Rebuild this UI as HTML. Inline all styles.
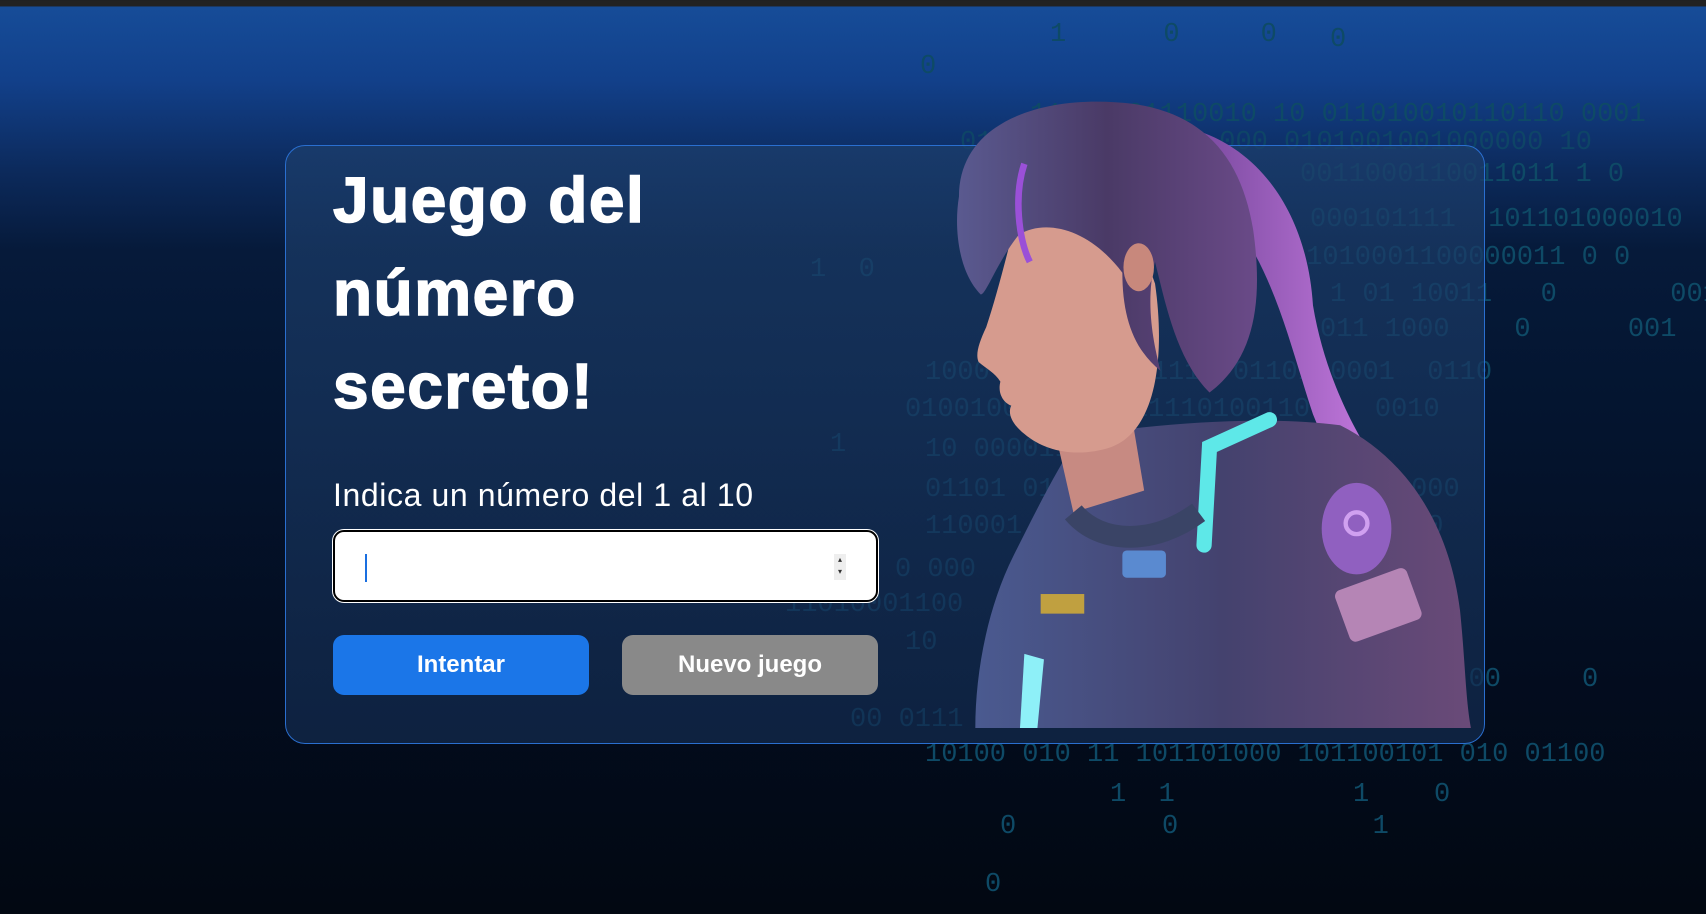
<!DOCTYPE html>
<html><head><meta charset="utf-8"><style>
*{margin:0;padding:0;box-sizing:border-box}
body{width:1706px;height:914px;overflow:hidden;position:relative;font-family:"Liberation Sans",sans-serif;
background:linear-gradient(180deg,#222 0,#222 6px,#164c98 7px,#12408a 80px,#0c2a5c 170px,#061a3a 250px,#041530 400px,#030d20 650px,#020812 914px)}
.bin{position:absolute;font-family:"Liberation Mono",monospace;font-size:27px;color:#0e4a66;white-space:pre}
.card{position:absolute;left:285px;top:145px;width:1200px;height:599px;border:1px solid #2a6fd0;border-radius:20px;
background:linear-gradient(180deg,rgba(28,62,108,.72),rgba(18,42,78,.72))}
h1{position:absolute;left:333px;top:154px;font-size:64px;line-height:93px;color:#fff;font-weight:bold;letter-spacing:1.5px;-webkit-text-stroke:1.5px #fff}
.lbl{position:absolute;left:333px;top:477px;font-size:32px;letter-spacing:0.6px;color:#fff}
.inp{position:absolute;left:333px;top:530px;width:545px;height:72px;background:#fff;border:2px solid #000;border-radius:11px;box-shadow:0 0 0 1px #fff}
.caret{position:absolute;left:30px;top:22px;width:2px;height:28px;background:#1a6fe0}
.spin{position:absolute;right:30px;top:22px;width:12px;height:26px;background:#eee;font-size:8px;line-height:12px;text-align:center;color:#333}
.btn{position:absolute;top:635px;height:60px;border-radius:11px;color:#fff;font-weight:bold;font-size:24px;display:flex;align-items:center;justify-content:center}
</style></head><body>
<div class="bin" style="left:1030px;top:100px">11 00001110010 10 011010010110110 0001</div>
<div class="bin" style="left:960px;top:128px;opacity:.8">0110            000 0101001001000000 10</div>
<div class="bin" style="left:1300px;top:160px">0011000110011011 1 0</div>
<div class="bin" style="left:1310px;top:205px">000101111  101101000010</div>
<div class="bin" style="left:1290px;top:243px">11010001100000011 0 0</div>
<div class="bin" style="left:1330px;top:280px">1 01 10011   0       0010</div>
<div class="bin" style="left:1320px;top:315px">011 1000    0      001</div>
<div class="bin" style="left:925px;top:358px">1000          1110 0110100001  0110</div>
<div class="bin" style="left:905px;top:395px">0100100       1111010011000  0010</div>
<div class="bin" style="left:925px;top:435px">10 0000111      1110111</div>
<div class="bin" style="left:925px;top:475px">01101 010       0010 111111 01000</div>
<div class="bin" style="left:925px;top:512px">110001 1         1000110100011 0</div>
<div class="bin" style="left:895px;top:555px">0 000  01       01011000 1010</div>
<div class="bin" style="left:785px;top:590px">11010001100      10 0000101 1</div>
<div class="bin" style="left:905px;top:628px">10                 00111010001 1</div>
<div class="bin" style="left:1420px;top:665px">10 00     0</div>
<div class="bin" style="left:850px;top:705px">00 0111             00101 11011</div>
<div class="bin" style="left:925px;top:740px">10100 010 11 101101000 101100101 010 01100</div>
<div class="bin" style="left:1050px;top:20px">1      0     0</div>
<div class="bin" style="left:920px;top:52px">0</div>
<div class="bin" style="left:1330px;top:25px">0</div>
<div class="bin" style="left:1110px;top:780px">1  1           1    0</div>
<div class="bin" style="left:1000px;top:812px">0         0            1</div>
<div class="bin" style="left:985px;top:870px">0</div>
<div class="bin" style="left:810px;top:255px">1  0</div>
<div class="bin" style="left:830px;top:430px">1</div>
<div class="card"></div>
<svg style="position:absolute;left:937px;top:93px" width="545" height="635" viewBox="860 85 500 583">
<defs>
<linearGradient id="h" x1="0" x2="1"><stop offset="0" stop-color="#5a5a90"/><stop offset=".5" stop-color="#4a3a66"/><stop offset="1" stop-color="#6a4a88"/></linearGradient>
<linearGradient id="p" x1="0" x2="1"><stop offset="0" stop-color="#7a4aa0"/><stop offset="1" stop-color="#d080e8"/></linearGradient>
<linearGradient id="a" x1="0" x2="1"><stop offset="0" stop-color="#4a5a90"/><stop offset=".5" stop-color="#44426e"/><stop offset="1" stop-color="#6a4a78"/></linearGradient>
</defs>
<path d="M1100 120 C1160 140 1200 200 1205 280 C1215 340 1240 390 1260 420 C1280 460 1300 500 1285 510 C1250 470 1225 430 1205 380 C1185 320 1170 250 1130 200 Z" fill="url(#p)"/>
<path d="M990 400 C1050 390 1150 380 1230 390 C1290 420 1330 480 1340 560 C1345 610 1345 640 1350 668 L895 668 C895 620 905 560 930 510 C950 470 970 430 990 400 Z" fill="url(#a)"/>
<path d="M960 360 L1040 390 L1050 450 L985 470 Z" fill="#c78a82"/>
<path d="M935 190 C925 230 915 270 905 300 C898 315 895 325 898 332 C905 338 913 342 918 350 C915 362 922 370 928 372 C924 380 930 390 940 398 C960 415 990 420 1020 410 C1060 395 1070 330 1060 260 C1040 200 990 180 935 190 Z" fill="#d69b8e"/>
<path d="M880 180 C880 110 960 85 1040 95 C1110 105 1140 150 1150 210 C1160 280 1150 330 1110 360 C1080 330 1070 280 1060 240 C1050 280 1060 320 1065 340 C1040 320 1030 290 1030 250 C1000 210 960 200 935 215 C915 240 905 270 900 270 C880 250 875 210 880 180 Z" fill="url(#h)"/>
<path d="M940 150 C930 180 935 220 945 240" stroke="#9a50d8" stroke-width="6" fill="none"/>
<ellipse cx="1045" cy="245" rx="14" ry="22" fill="#c8887c"/>
<path d="M1105 500 L1110 410 L1165 385" stroke="#5ee8e8" stroke-width="14" fill="none" stroke-linecap="round"/>
<path d="M985 470 C1010 500 1060 500 1100 470" stroke="#3a4466" stroke-width="20" fill="none"/>
<ellipse cx="1245" cy="485" rx="32" ry="42" fill="#9060c0"/>
<circle cx="1245" cy="480" r="10" fill="none" stroke="#d0a0f0" stroke-width="4"/>
<rect x="1230" y="530" width="70" height="50" rx="6" fill="#b585b5" transform="rotate(-20 1265 555)"/>
<rect x="1030" y="505" width="40" height="25" rx="4" fill="#5a8ad0"/>
<rect x="955" y="545" width="40" height="18" fill="#c0a040"/>
<path d="M940 600 L936 668 L952 668 L958 605 Z" fill="#8ef0f8"/>
</svg>
<h1>Juego del<br>número<br>secreto!</h1>
<div class="lbl">Indica un número del 1 al 10</div>
<div class="inp"><div class="caret"></div><div class="spin">▴<br>▾</div></div>
<div class="btn" style="left:333px;width:256px;background:#1b76e8">Intentar</div>
<div class="btn" style="left:622px;width:256px;background:#898989">Nuevo juego</div>
</body></html>
